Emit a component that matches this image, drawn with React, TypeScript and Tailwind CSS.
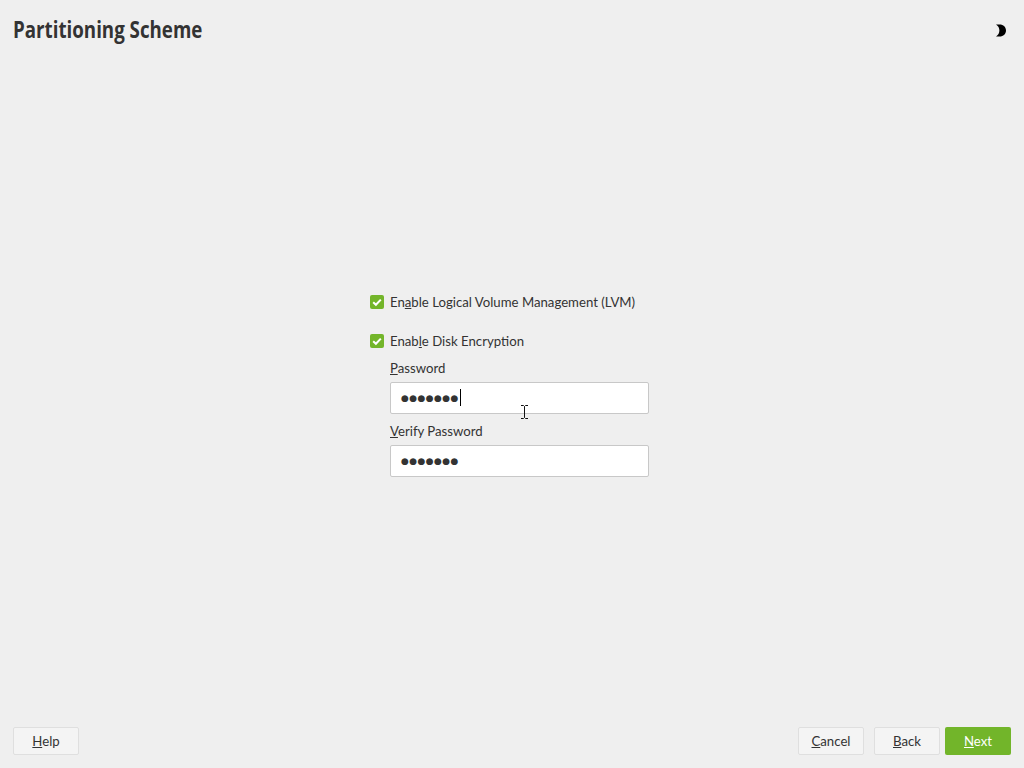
function Check() {
  return (
    <span className="flex h-[14px] w-[14px] shrink-0 items-center justify-center rounded-[2px] bg-[#73b52a]">
      <svg viewBox="0 0 14 14" className="h-[14px] w-[14px]" fill="none">
        <path d="M3.2 7.200 5.900 9.800 10.800 4.600" stroke="#fff" strokeWidth="2" />
      </svg>
    </span>
  );
}

function Field({ mnemonic, rest, caret }: { mnemonic: string; rest: string; caret?: boolean }) {
  return (
    <div className="flex flex-col">
      <label className="h-[18px] leading-[18px]">
        <u>{mnemonic}</u>
        {rest}
      </label>
      <div className="mt-[5px] flex h-[32px] items-center rounded-[2px] border border-[#c8c8c8] bg-white pl-[10px]">
        <span className="pt-[2px] font-['DejaVu_Sans',sans-serif] text-[9px] tracking-[0.4px] text-[#333]">{"●●●●●●●"}</span>
        {caret && <span className="ml-[1px] h-[17px] w-px bg-black" />}
      </div>
    </div>
  );
}

function Btn({ k, rest, primary }: { k: string; rest: string; primary?: boolean }) {
  return (
    <button
      className={
        primary
          ? "h-[28px] w-[66px] rounded-[2px] bg-[#72b52a] pt-px text-white"
          : "h-[28px] w-[66px] rounded-[2px] border border-[#dfdfdf] bg-[#f4f4f4] pt-px text-[#333]"
      }
    >
      <u>{k}</u>
      {rest}
    </button>
  );
}

export default function App() {
  return (
    <div className="flex h-screen flex-col bg-[#efefef] font-['Lato',sans-serif] text-[13.2px] text-[#333]">
      <header className="flex h-[60px] items-center justify-between pl-[13px] pr-[17px]">
        <h1 className="mt-[-2px] origin-left scale-x-[0.78] whitespace-nowrap font-['Open_Sans',sans-serif] text-[24px] font-bold text-[#333]">
          Partitioning Scheme
        </h1>
        <svg viewBox="0 0 12 14" className="h-[15px] w-[12px]">
          <path d="M1 1h3.500C8.500 1 11 3.600 11 7s-2.500 6-6.500 6H1c2.200-1.400 3.400-3.500 3.400-6S3.200 2.400 1 1z" fill="#000" />
        </svg>
      </header>

      <main className="flex flex-1 items-center justify-center pb-[18px] pr-[5px]">
        <div className="relative flex w-[279px] flex-col">
          <div className="flex h-[18px] items-center gap-[6px] whitespace-nowrap">
            <Check />
            <span className="pt-[2px]">
              En<u>a</u>ble Logical Volume Management (LVM)
            </span>
          </div>
          <div className="mt-[21px] flex h-[18px] items-center gap-[6px] whitespace-nowrap">
            <Check />
            <span className="pt-[2px]">
              Enab<u>l</u>e Disk Encryption
            </span>
          </div>
          <div className="ml-[20px] mt-[9px] flex flex-col gap-[8px]">
            <Field mnemonic="P" rest="assword" caret />
            <Field mnemonic="V" rest="erify Password" />
          </div>
          <svg viewBox="0 0 9 14" className="absolute left-[150px] top-[112px] h-[14px] w-[9px]" fill="none">
            <path d="M1 .5h2.500L4.500 1.500 5.500.5H8M4.500 1.500v11M1 13.500h2.500l1-1 1 1H8" stroke="#111" />
          </svg>
        </div>
      </main>

      <footer className="flex h-[41px] items-start justify-between px-[13px]">
        <Btn k="H" rest="elp" />
        <div className="flex">
          <Btn k="C" rest="ancel" />
          <div className="ml-[10px]">
            <Btn k="B" rest="ack" />
          </div>
          <div className="ml-[5px]">
            <Btn k="N" rest="ext" primary />
          </div>
        </div>
      </footer>
    </div>
  );
}
